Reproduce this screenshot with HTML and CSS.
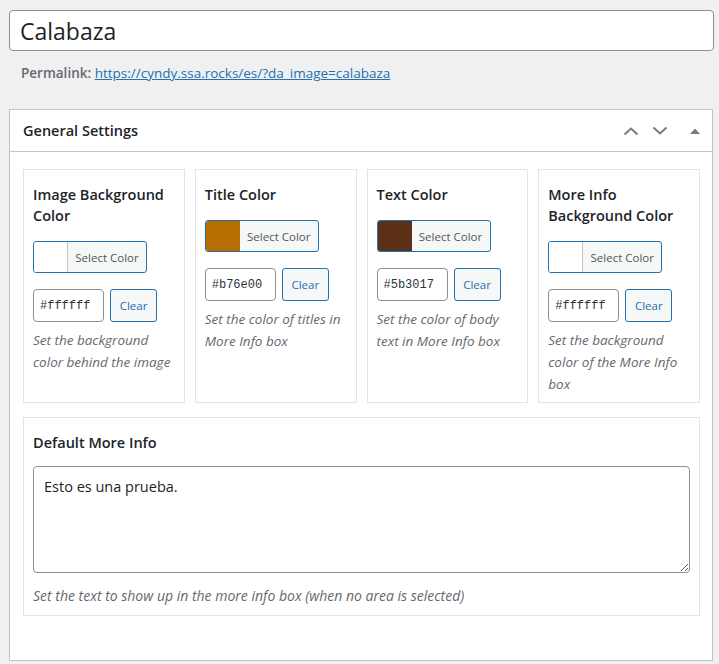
FILE: index.html
```html
<!DOCTYPE html>
<html lang="es">
<head>
<meta charset="utf-8">
<title>Calabaza</title>
<link rel="stylesheet" href="styles.css">
</head>
<body>
<div class="wrap">
  <input class="title-input" type="text" value="Calabaza">
  <div class="permalink"><strong>Permalink:</strong> <a href="#">https://cyndy.ssa.rocks/es/?da_image=calabaza</a></div>

  <div class="postbox">
    <div class="postbox-header">
      <h2>General Settings</h2>
      <div class="handles">
        <svg class="h-up" width="16" height="10" viewBox="0 0 16 10"><path d="M1.5 8.5 L8 2.5 L14.5 8.5" fill="none" stroke="#787c82" stroke-width="2"/></svg>
        <svg class="h-down" width="16" height="10" viewBox="0 0 16 10"><path d="M1.5 1.5 L8 7.5 L14.5 1.5" fill="none" stroke="#787c82" stroke-width="2"/></svg>
        <svg class="h-toggle" width="10" height="6" viewBox="0 0 10 6"><path d="M0 6 L5 0.5 L10 6 Z" fill="#787c82"/></svg>
      </div>
    </div>
    <div class="inside">
      <div class="grid">
        <div class="card">
          <h3>Image Background Color</h3>
          <button class="color-btn"><span class="swatch swatch-white"></span><span class="color-text">Select Color</span></button>
          <div class="hex-row"><input class="hex" type="text" value="#ffffff"><button class="clear">Clear</button></div>
          <p class="desc">Set the background color behind the image</p>
        </div>
        <div class="card">
          <h3>Title Color</h3>
          <button class="color-btn"><span class="swatch swatch-orange"></span><span class="color-text">Select Color</span></button>
          <div class="hex-row"><input class="hex" type="text" value="#b76e00"><button class="clear">Clear</button></div>
          <p class="desc">Set the color of titles in More Info box</p>
        </div>
        <div class="card">
          <h3>Text Color</h3>
          <button class="color-btn"><span class="swatch swatch-brown"></span><span class="color-text">Select Color</span></button>
          <div class="hex-row"><input class="hex" type="text" value="#5b3017"><button class="clear">Clear</button></div>
          <p class="desc">Set the color of body text in More Info box</p>
        </div>
        <div class="card">
          <h3>More Info Background Color</h3>
          <button class="color-btn"><span class="swatch swatch-white"></span><span class="color-text">Select Color</span></button>
          <div class="hex-row"><input class="hex" type="text" value="#ffffff"><button class="clear">Clear</button></div>
          <p class="desc">Set the background color of the More Info box</p>
        </div>
      </div>
      <div class="card card-wide">
        <h3>Default More Info</h3>
        <textarea class="textarea">Esto es una prueba.</textarea>
        <p class="desc desc-small">Set the text to show up in the more info box (when no area is selected)</p>
      </div>
    </div>
  </div>
</div>
</body>
</html>
```
FILE: styles.css
```css
* { box-sizing: border-box; }
html, body { margin: 0; padding: 0; }
body {
  background: #f0f0f1;
  font-family: "Open Sans", "Noto Sans", sans-serif;
  color: #1d2327;
  font-size: 13px;
}
.wrap {
  padding: 10px 5px 0 9px;
}
.title-input {
  display: block;
  width: 100%;
  height: 41px;
  border: 1px solid #8c8f94;
  border-radius: 4px;
  padding: 0 10px;
  font-family: inherit;
  font-size: 23px;
  color: #1d2327;
  background: #fff;
  outline: none;
}
.permalink {
  margin-top: 10px;
  padding-left: 12px;
  line-height: 24px;
  font-size: 13.5px;
  color: #646970;
}
.permalink strong { font-weight: 600; }
.permalink a { color: #2271b1; text-decoration: underline; }

.postbox {
  margin-top: 24px;
  width: 704px;
  background: #fff;
  border: 1px solid #c3c4c7;
}
.postbox-header {
  height: 42px;
  border-bottom: 1px solid #c3c4c7;
  display: flex;
  align-items: center;
  justify-content: space-between;
  padding-left: 13px;
}
.postbox-header h2 {
  margin: 0;
  font-size: 14.5px;
  font-weight: 600;
  color: #1d2327;
}
.handles {
  display: flex;
  align-items: center;
  margin-right: 12px;
}
.h-up { margin-right: 13px; }
.h-down { margin-right: 22px; }
.inside {
  padding: 17px 12px 44px 13px;
}
.grid {
  display: grid;
  grid-template-columns: repeat(4, 1fr);
  gap: 10px;
}
.card {
  border: 1px solid #e4e4e4;
  padding: 14px 9px 7px 9px;
}
.card h3 {
  margin: 0 0 15px;
  font-size: 14.5px;
  line-height: 21px;
  font-weight: 600;
  color: #1d2327;
}
.color-btn {
  display: flex;
  align-items: stretch;
  height: 32px;
  width: 114px;
  padding: 0;
  border: 1px solid #2271b1;
  border-radius: 3px;
  background: #f6f7f7;
  overflow: hidden;
  font-family: inherit;
  cursor: pointer;
}
.swatch {
  width: 34px;
  border-right: 1px solid #c3c4c7;
}
.swatch-white { background: #fff; }
.swatch-orange { background: #b76e00; border-right-color: #b76e00; }
.swatch-brown { background: #5b3017; border-right-color: #5b3017; }
.color-text {
  flex: 1;
  display: flex;
  align-items: center;
  justify-content: center;
  font-size: 11.5px;
  color: #50575e;
}
.hex-row {
  display: flex;
  gap: 6px;
  margin-top: 16px;
}
.hex {
  width: 71px;
  height: 33px;
  border: 1px solid #8c8f94;
  border-radius: 4px;
  padding: 0 6px;
  font-family: "Liberation Mono", monospace;
  font-size: 12px;
  color: #2c3338;
  background: #fff;
  outline: none;
}
.clear {
  width: 47px;
  height: 33px;
  border: 1px solid #2271b1;
  border-radius: 3px;
  background: #f6f7f7;
  color: #2271b1;
  font-family: inherit;
  font-size: 11.5px;
  padding: 0;
}
.desc {
  margin: 7px 0 0;
  font-size: 13.5px;
  line-height: 22px;
  font-style: italic;
  color: #646970;
}
.card-wide {
  margin-top: 14px;
  padding-bottom: 8px;
}
.card-wide h3 { margin-bottom: 13px; }
.textarea {
  display: block;
  width: 100%;
  height: 107px;
  border: 1px solid #8c8f94;
  border-radius: 4px;
  padding: 10px 10px;
  font-family: inherit;
  font-size: 14.5px;
  line-height: 20px;
  color: #1d2327;
  resize: vertical;
  outline: none;
}
.desc-small {
  margin-top: 12px;
  font-size: 14px;
  line-height: 22px;
}
```
